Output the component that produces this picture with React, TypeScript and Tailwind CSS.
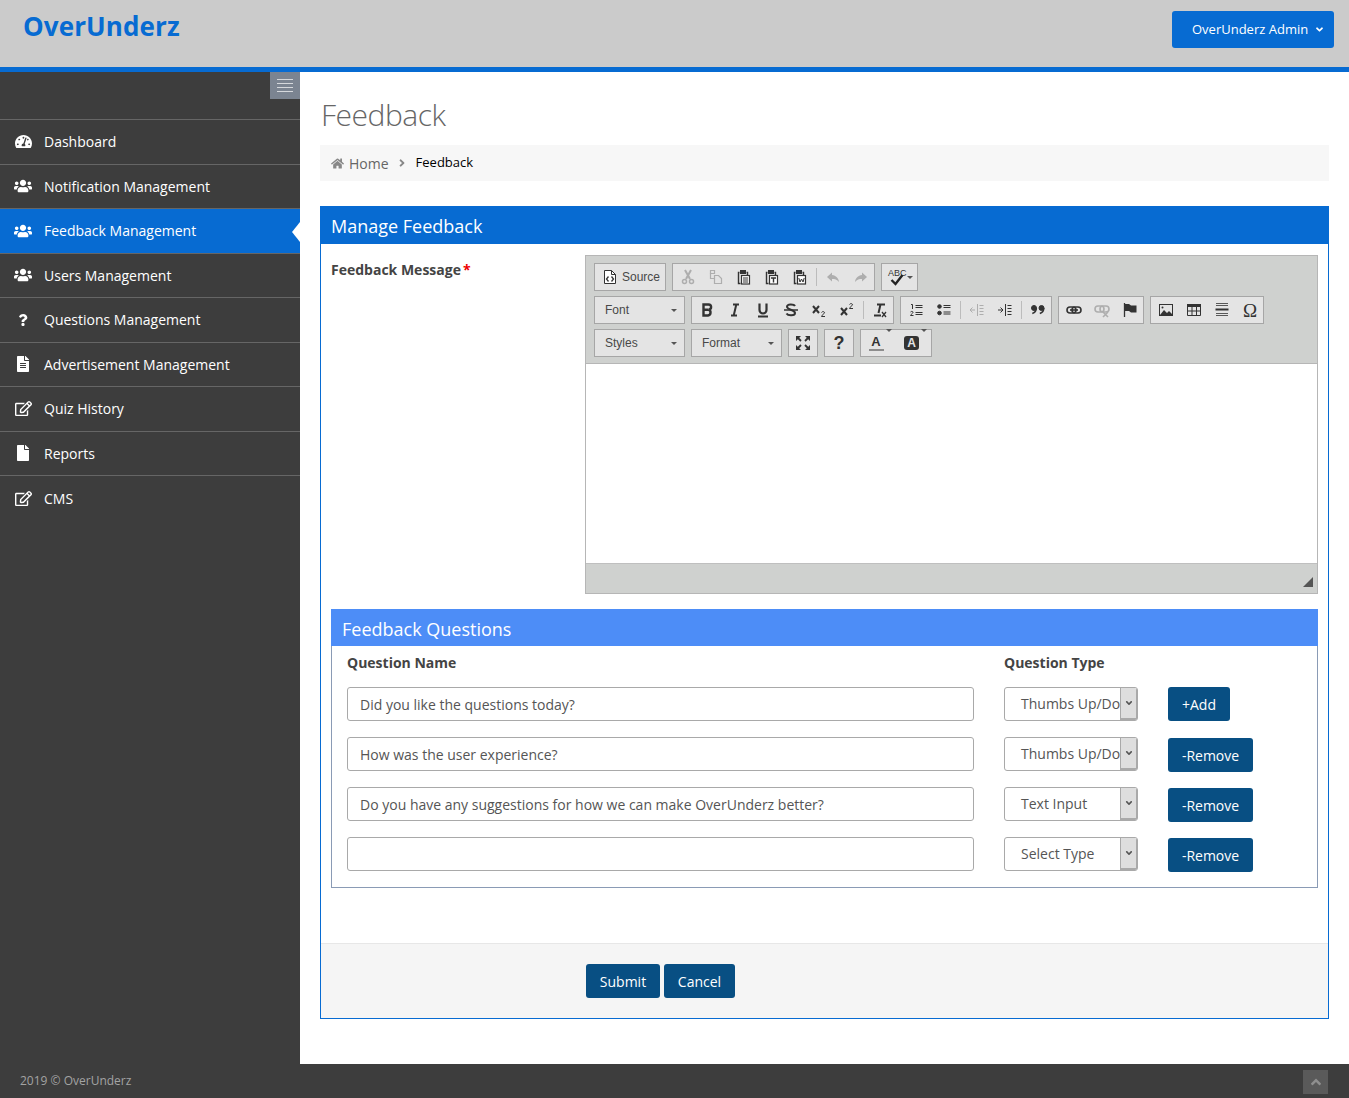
import type { ReactNode } from 'react';
import { FaAngleDown, FaAngleRight, FaAngleUp, FaFile, FaFileAlt, FaHome, FaQuestion, FaRegEdit, FaTachometerAlt, FaUsers } from 'react-icons/fa';

const font = { fontFamily: '"Open Sans", "Liberation Sans", sans-serif' };

const menu = [
  { label: 'Dashboard', icon: <FaTachometerAlt size={17} /> },
  { label: 'Notification Management', icon: <FaUsers size={18} /> },
  { label: 'Feedback Management', icon: <FaUsers size={18} />, active: true },
  { label: 'Users Management', icon: <FaUsers size={18} /> },
  { label: 'Questions Management', icon: <FaQuestion size={12} /> },
  { label: 'Advertisement Management', icon: <FaFileAlt size={16} /> },
  { label: 'Quiz History', icon: <FaRegEdit size={17} /> },
  { label: 'Reports', icon: <FaFile size={16} /> },
  { label: 'CMS', icon: <FaRegEdit size={17} /> },
];

const rows = [
  { q: 'Did you like the questions today?', t: 'Thumbs Up/Down', add: true },
  { q: 'How was the user experience?', t: 'Thumbs Up/Down' },
  { q: 'Do you have any suggestions for how we can make OverUnderz better?', t: 'Text Input' },
  { q: '', t: 'Select Type' },
];

// editor toolbar icons, 16x16
function Ico({ children, off }: { children: ReactNode; off?: boolean }) {
  return (
    <svg width="16" height="16" viewBox="0 0 16 16" fill="none" stroke="#333" strokeWidth="1" className={off ? 'opacity-30' : ''}>
      {children}
    </svg>
  );
}

function Clip({ mark }: { mark?: ReactNode }) {
  return (
    <Ico>
      <path d="M3.5 3.5h-1v11h2M10.5 3.5h1v3" strokeWidth="1.4" />
      <rect x="4.5" y="1.5" width="5" height="3" fill="#333" />
      <rect x="5.5" y="6.5" width="8" height="8.5" fill="#fff" strokeWidth="1.2" />
      {mark}
    </Ico>
  );
}

function Btn({ children, w = 'w-[28px]' }: { children: ReactNode; w?: string }) {
  return <div className={`${w} h-full flex items-center justify-center shrink-0`}>{children}</div>;
}

function Group({ children, className = '' }: { children: ReactNode; className?: string }) {
  return <div className={`h-[28px] bg-[#e4e4e4] border border-[#a6a6a6] flex items-center ${className}`}>{children}</div>;
}

function Sep() {
  return <div className="w-px h-[18px] bg-[#bcbcbc] shrink-0 mx-[2px]" />;
}

function Combo({ label }: { label: string }) {
  return (
    <Group className="w-[91px] pl-[10px] pr-[7px] justify-between text-[12px] text-[#484848]">
      <span style={{ fontFamily: '"Liberation Sans", sans-serif' }}>{label}</span>
      <Caret />
    </Group>
  );
}

function Caret() {
  return <span className="w-0 h-0 border-x-[3px] border-x-transparent border-t-[3px] border-t-[#555]" />;
}

function Toolbar() {
  return (
    <div className="bg-[#cfd1cf] border-b border-[#b6b6b6] h-[108px] pt-[7px] pl-[8px] flex flex-col gap-[5px]">
      <div className="flex gap-[6px]">
        <Group className="w-[72px] pl-[8px] gap-[5px] text-[12px] text-[#484848]">
          <svg width="14" height="16" viewBox="0 0 14 16" fill="none" stroke="#333">
            <path d="M1.5 1.5h7l4 4v9h-11z" fill="#fff" />
            <path d="M8.5 1.5v4h4" />
            <path d="M5.5 7.5l-2 2.5 2 2.5M8.5 7.5l2 2.5-2 2.5" strokeWidth="1.3" />
          </svg>
          <span style={{ fontFamily: '"Liberation Sans", sans-serif' }}>Source</span>
        </Group>
        <Group className="w-[203px] pl-[1px]">
          <Btn>
            <Ico off>
              <path d="M5 1l5 9M11 1l-5 9" strokeWidth="2" />
              <circle cx="4.5" cy="12.5" r="2" strokeWidth="1.5" />
              <circle cx="11.5" cy="12.5" r="2" strokeWidth="1.5" />
            </Ico>
          </Btn>
          <Btn>
            <Ico off>
              <path d="M2.5 1.5h4v3h-4zM6.5 6.5h4l3 3v5h-7z" strokeWidth="1.2" />
              <path d="M2.5 4.5v5h4" strokeWidth="1.2" />
            </Ico>
          </Btn>
          <Btn><Clip mark={<path d="M7 9h5M7 11h5M7 13h5" />} /></Btn>
          <Btn><Clip mark={<path d="M7 9h5M9.5 9v4.5" strokeWidth="1.4" />} /></Btn>
          <Btn><Clip mark={<path d="M6.8 9l1.2 4 1.5-3 1.5 3 1.2-4" />} /></Btn>
          <Sep />
          <Btn>
            <Ico off>
              <path d="M7 3.5L2 8l5 4.5V10c3 0 5 .5 7 3-.5-4-3-6.5-7-7z" fill="#333" stroke="none" />
            </Ico>
          </Btn>
          <Btn>
            <Ico off>
              <path d="M9 3.5L14 8l-5 4.5V10c-3 0-5 .5-7 3 .5-4 3-6.5 7-7z" fill="#333" stroke="none" />
            </Ico>
          </Btn>
        </Group>
        <Group className="w-[37px] pl-[6px] gap-[2px]">
          <div className="relative w-[17px] h-[18px]">
            <span className="absolute left-0 top-0 text-[9px] leading-[10px] text-[#333]" style={{ fontFamily: '"Liberation Sans", sans-serif' }}>ABC</span>
            <svg className="absolute left-[2px] top-[6px]" width="14" height="12" viewBox="0 0 14 12" fill="none" stroke="#222" strokeWidth="2.4">
              <path d="M1.5 6l4 4 7-9" />
            </svg>
          </div>
          <Caret />
        </Group>
      </div>
      <div className="flex gap-[6px]">
        <Combo label="Font" />
        <Group className="w-[203px] pl-[1px]">
          <Btn><Ico><path d="M4.5 2.5h5a2.5 2.5 0 010 5.2 3 3 0 01-.5 5.8H4.5zM4.5 7.7h4.7" strokeWidth="2.4" /></Ico></Btn>
          <Btn><Ico><path d="M6 2.5h6M4 13.5h6M9.3 2.5L6.7 13.5" strokeWidth="2" /></Ico></Btn>
          <Btn><Ico><path d="M4.5 1.5v6.5a3.5 3.5 0 007 0V1.5" strokeWidth="2.2" /><path d="M3 14.5h10" strokeWidth="2" /></Ico></Btn>
          <Btn><Ico><path d="M12 4c-1-2-8-2.500-8 .8C4 8 12 7.500 12 11c0 3-7 3-8.500.5" strokeWidth="2" /><path d="M1 8h14" strokeWidth="1.5" /></Ico></Btn>
          <Btn><Ico><path d="M2 4l6 7M8 4l-6 7" strokeWidth="2" /><path d="M10.500 10.500c1-1.500 3-1 3 .3 0 1-2.500 1.700-3 3.700h3.500" strokeWidth="1" /></Ico></Btn>
          <Btn><Ico><path d="M2 6l6 7M8 6l-6 7" strokeWidth="2" /><path d="M10.500 2.500c1-1.500 3-1 3 .3 0 1-2.500 1.700-3 3.700h3.500" strokeWidth="1" /></Ico></Btn>
          <Sep />
          <Btn><Ico><path d="M5 2.500h8M8.500 2.500L6.500 11M2 13.500h7" strokeWidth="2" /><path d="M10 10l4 5M14 10l-4 5" strokeWidth="1.300" /></Ico></Btn>
        </Group>
        <Group className="w-[152px] pl-[1px]">
          <Btn><Ico><path d="M3 2.500h1.500V7M2.500 10c1-1 2.500-.7 2.500.4 0 .9-2 1.600-2.500 3.100H5.500M7.500 3.500h7M7.500 5.500h7M7.500 10.500h7M7.500 12.500h7" /></Ico></Btn>
          <Btn><Ico><circle cx="3.500" cy="4.500" r="1.800" fill="#333" /><circle cx="3.500" cy="11" r="1.800" fill="#333" /><path d="M7.500 3.500h7M7.500 5.500h7M7.500 10h7M7.500 12h7" /></Ico></Btn>
          <Sep />
          <Btn><Ico off><path d="M1 8h5M3.500 5.500L1 8l2.500 2.500M8.500 2v12M10.500 3.500h4M10.500 6.500h4M10.500 9.500h4M10.500 12.500h4" /></Ico></Btn>
          <Btn><Ico><path d="M1 8h5M3.500 5.500L6 8l-2.500 2.500M8.500 2v12M10.500 3.500h4M10.500 6.500h4M10.500 9.500h4M10.500 12.500h4" /></Ico></Btn>
          <Sep />
          <Btn><Ico><circle cx="4" cy="6" r="2.500" fill="#333" /><path d="M6.300 6c0 3-1.800 4.800-4 5.500" strokeWidth="1.600" /><circle cx="11.500" cy="6" r="2.500" fill="#333" /><path d="M13.800 6c0 3-1.800 4.800-4 5.500" strokeWidth="1.600" /></Ico></Btn>
        </Group>
        <Group className="w-[86px] pl-[1px]">
          <Btn><Ico><rect x="1" y="5" width="9" height="6" rx="3" strokeWidth="1.600" /><rect x="6" y="5" width="9" height="6" rx="3" strokeWidth="1.600" /><path d="M4 8h8" strokeWidth="1.600" /></Ico></Btn>
          <Btn><Ico off><rect x="1" y="4" width="9" height="6" rx="3" strokeWidth="1.600" /><rect x="6" y="4" width="9" height="6" rx="3" strokeWidth="1.600" /><path d="M9 10l5 5M14 10l-5 5" strokeWidth="1.600" /></Ico></Btn>
          <Btn><Ico><path d="M2.500 1v14" strokeWidth="1.300" /><path d="M3 2h4l2 1.500h5.500v7H9L7 9H3z" fill="#333" stroke="none" /></Ico></Btn>
        </Group>
        <Group className="w-[114px] pl-[1px]">
          <Btn><Ico><rect x="1.500" y="2.500" width="13" height="11" strokeWidth="1" /><path d="M2 13l4-5 3 3 2-2 4 4z" fill="#333" stroke="none" /><circle cx="4.500" cy="5.500" r="1" fill="#333" stroke="none" /></Ico></Btn>
          <Btn><Ico><rect x="1" y="2" width="14" height="3" fill="#333" stroke="none" /><path d="M1.500 4.500h13v9h-13zM1.500 9h13M6 4.500v9M10.500 4.500v9" /></Ico></Btn>
          <Btn><Ico><path d="M2 1.500h12M2 3.500h12M2 11.500h12M2 13.500h12" strokeWidth=".8" /><path d="M1.500 7.500h13" strokeWidth="2" /></Ico></Btn>
          <Btn><span className="text-[19px] leading-none text-[#333]" style={{ fontFamily: '"Liberation Serif", serif' }}>Ω</span></Btn>
        </Group>
      </div>
      <div className="flex gap-[6px]">
        <Combo label="Styles" />
        <Combo label="Format" />
        <Group className="w-[30px] justify-center">
          <Ico>
            <path d="M2 2l4 4M14 2l-4 4M2 14l4-4M14 14l-4-4" strokeWidth="1.800" />
            <path d="M1 1h5L1 6zM15 1h-5l5 5zM1 15h5l-5-5zM15 15h-5l5-5z" fill="#333" stroke="none" />
          </Ico>
        </Group>
        <Group className="w-[30px] justify-center">
          <span className="text-[18px] font-bold leading-none text-[#333]" style={{ fontFamily: '"Liberation Sans", sans-serif' }}>?</span>
        </Group>
        <Group className="w-[72px] pl-[7px]">
          <div className="flex flex-col items-center w-[16px]">
            <span className="text-[13px] font-bold leading-[13px] text-[#333]" style={{ fontFamily: '"Liberation Sans", sans-serif' }}>A</span>
            <span className="w-[15px] h-[2px] bg-[#8d8d8d] mt-px" />
          </div>
          <span className="ml-[2px]"><Caret /></span>
          <div className="ml-[12px] w-[15px] h-[14px] bg-[#333] rounded-[3px] flex items-center justify-center text-[#e4e4e4] text-[12px] font-bold leading-none" style={{ fontFamily: '"Liberation Sans", sans-serif' }}>A</div>
          <span className="ml-[2px]"><Caret /></span>
        </Group>
      </div>
    </div>
  );
}

function QuestionRow({ q, t, add }: { q: string; t: string; add?: boolean }) {
  return (
    <div className="flex h-[50px]">
      <input
        readOnly
        value={q}
        className="w-[627px] h-[34px] border border-[#a9a9a9] rounded-[3px] px-[12px] text-[14px] text-[#555] bg-white outline-none"
      />
      <div className="ml-[30px] w-[134px] h-[34px] border border-[#a9a9a9] rounded-[3px] flex bg-white overflow-hidden">
        <div className="w-[115px] pl-[16px] pr-[11px] text-[14px] leading-[32px] text-[#555] whitespace-nowrap overflow-hidden">{t}</div>
        <div className="flex-1 bg-[#dedede] border-l border-[#a9a9a9] border-b-2 border-r flex items-center justify-center">
          <FaAngleDown size={10} className="text-[#555]" />
        </div>
      </div>
      <button className={`ml-[30px] h-[34px] rounded-[3px] bg-[#084f83] text-white text-[14px] ${add ? 'w-[62px]' : 'w-[85px] mt-px'}`}>
        {add ? '+Add' : '-Remove'}
      </button>
    </div>
  );
}

export default function App() {
  return (
    <div className="w-[1349px] h-[1098px] flex flex-col bg-white overflow-hidden" style={font}>
      {/* top bar */}
      <header className="h-[72px] shrink-0 bg-[#cbcbcb] border-b-[5px] border-[#076bd2] flex justify-between pl-[23px] pr-[15px]">
        <div className="text-[26px] font-bold text-[#076bd2] leading-[28px] mt-[12px] tracking-[0.1px]">OverUnderz</div>
        <button className="mt-[11px] w-[162px] h-[37px] bg-[#076bd2] rounded-[3px] text-white text-[13px] flex items-center pl-[20px] gap-[6px]">
          OverUnderz Admin
          <FaAngleDown size={11} />
        </button>
      </header>

      <div className="flex flex-1 min-h-0">
        {/* sidebar */}
        <aside className="w-[300px] shrink-0 bg-[#3d3d3d]">
          <div className="h-[48px] flex justify-end items-start border-b border-[#666]">
            <div className="w-[30px] h-[27px] bg-[#7b8491] flex flex-col items-center justify-center gap-[3px]">
              <span className="w-[16px] h-px bg-[#d5d8dc]" />
              <span className="w-[16px] h-px bg-[#d5d8dc]" />
              <span className="w-[16px] h-px bg-[#d5d8dc]" />
              <span className="w-[16px] h-px bg-[#d5d8dc]" />
            </div>
          </div>
          {menu.map((m, i) => (
            <div
              key={m.label}
              className={`relative h-[44.5px] flex items-center text-[14px] text-white ${m.active ? 'bg-[#076bd2]' : ''} ${i < menu.length - 1 ? 'border-b border-[#666]' : ''}`}
            >
              <span className="w-[50px] pl-[8px] flex justify-center shrink-0 -ml-[2px] pr-[8px]">{m.icon}</span>
              <span className="-ml-[4px]">{m.label}</span>
              {m.active && (
                <span className="absolute right-0 top-[13px] w-0 h-0 border-y-[10px] border-y-transparent border-r-[8px] border-r-white" />
              )}
            </div>
          ))}
        </aside>

        {/* content */}
        <main className="flex-1 px-[20px] min-w-0">
          <h1 className="text-[30px] font-light text-[#666] leading-[40px] mt-[23px] ml-px tracking-[-0.5px]">Feedback</h1>
          <div className="mt-[10px] h-[36px] bg-[#f7f7f7] flex items-center pl-[11px] text-[14px]">
            <FaHome size={13} className="text-[#888]" />
            <span className="ml-[5px] text-[#666]">Home</span>
            <FaAngleRight size={12} className="ml-[7px] text-[#888]" />
            <span className="ml-[8px] text-[13px] text-black">Feedback</span>
          </div>

          <section className="mt-[25px] h-[813px] border border-[#076bd2] flex flex-col">
            <div className="h-[37px] shrink-0 bg-[#076bd2] text-white text-[18px] leading-[38px] px-[10px]">Manage Feedback</div>

            <div className="flex-1 px-[10px] pt-[11px]">
              <div className="flex">
                <div className="w-[254px] shrink-0 text-[14px] font-bold text-[#444] pt-[4px]">
                  Feedback Message<span className="text-[#e00] ml-[2px]">*</span>
                </div>
                <div className="w-[733px] h-[339px] border border-[#b6b6b6] flex flex-col">
                  <Toolbar />
                  <div className="flex-1 bg-white" />
                  <div className="h-[30px] bg-[#cfd1cf] border-t border-[#bfbfbf] relative">
                    <span className="absolute right-[4px] bottom-[6px] w-0 h-0 border-l-[10px] border-l-transparent border-b-[10px] border-b-[#555]" />
                  </div>
                </div>
              </div>

              <div className="mt-[15px] w-[987px] h-[279px] border border-[#8a9bb5] border-t-0 flex flex-col">
                <div className="h-[37px] bg-[#4d8df7] text-white text-[18px] leading-[41px] px-[11px] -mx-px">Feedback Questions</div>
                <div className="px-[15px]">
                  <div className="flex h-[41px] text-[14px] font-bold text-[#444] items-start pt-[6px]">
                    <span className="w-[657px]">Question Name</span>
                    <span>Question Type</span>
                  </div>
                  {rows.map((r) => (
                    <QuestionRow key={r.q + r.t} {...r} />
                  ))}
                </div>
              </div>
            </div>

            <div className="h-[75px] shrink-0 bg-[#f5f5f5] border-t border-[#e7e7e7] flex gap-[4px] pl-[265px] pt-[20px]">
              <button className="w-[74px] h-[34px] rounded-[3px] bg-[#084f83] text-white text-[14px]">Submit</button>
              <button className="w-[71px] h-[34px] rounded-[3px] bg-[#084f83] text-white text-[14px]">Cancel</button>
            </div>
          </section>
        </main>
      </div>

      {/* footer */}
      <footer className="h-[34px] shrink-0 bg-[#3d3d3d] flex items-center justify-between pl-[20px] pr-[21px]">
        <span className="text-[12px] text-[#a3a3a3]">2019 © OverUnderz</span>
        <div className="w-[25px] h-[24px] bg-[#5a5a5a] flex items-center justify-center mt-[2px]">
          <FaAngleUp size={16} className="text-[#8f8f8f]" />
        </div>
      </footer>
    </div>
  );
}
